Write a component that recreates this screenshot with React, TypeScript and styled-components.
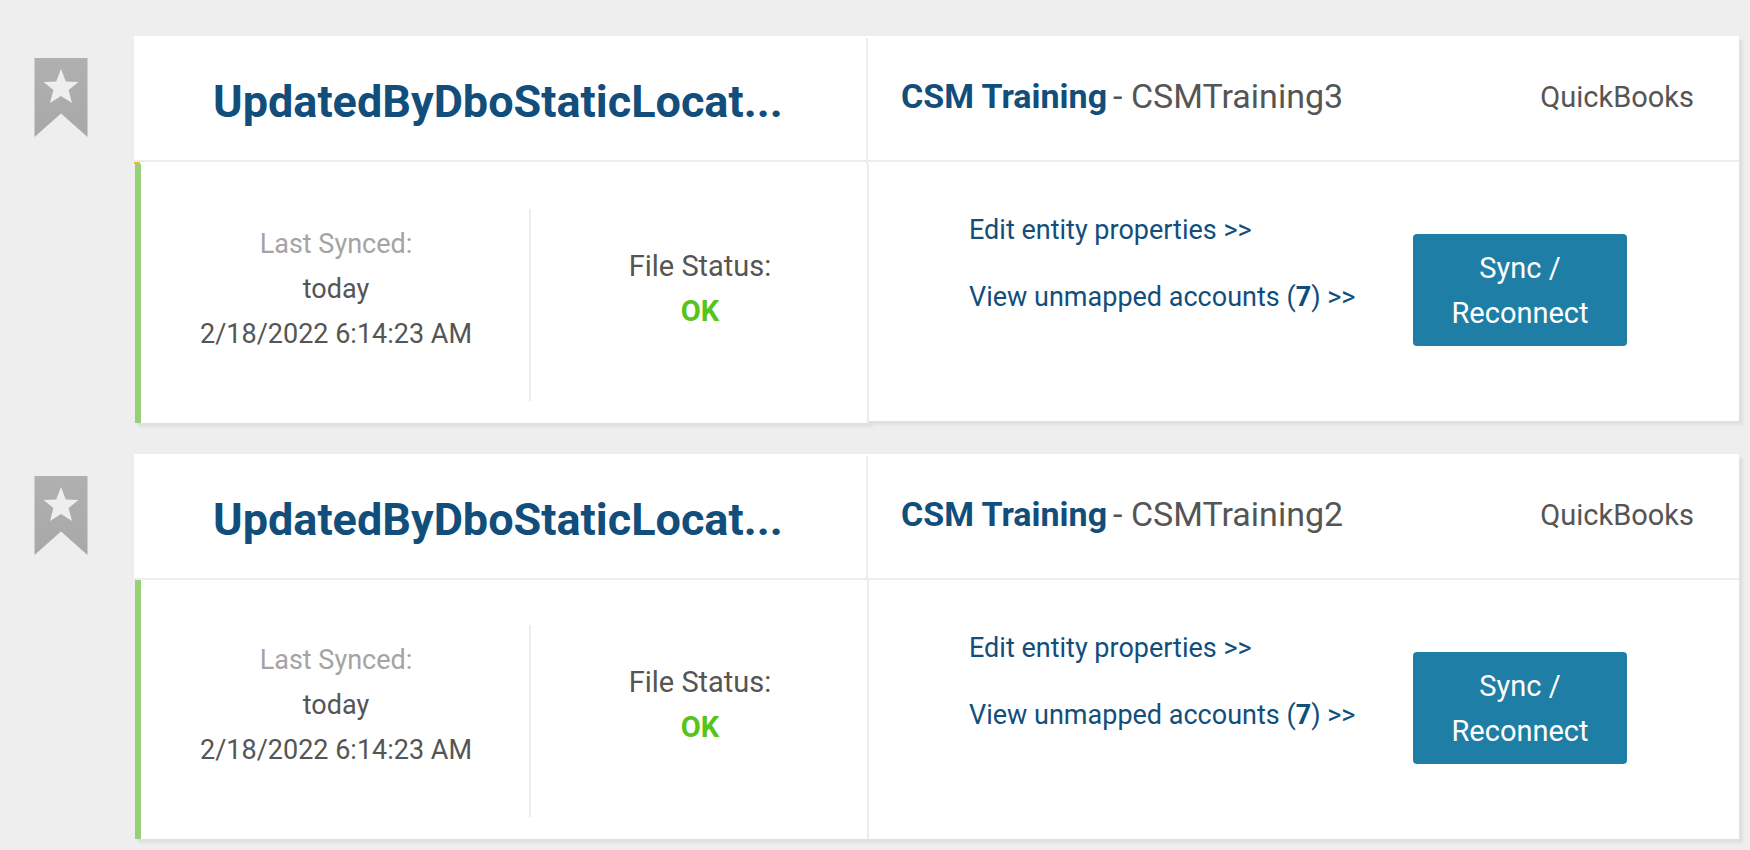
import React from "react";
import styled, { createGlobalStyle } from "styled-components";

const color = {
  page: "#eeeeee",
  line: "#ededed",
  shadow: "#e0e0e0",
  brand: "#124e7c",
  text: "#555555",
  muted: "#a4a4a4",
  green: "#97d077",
  ok: "#55c517",
  alert: "#f5b91b",
  button: "#1e7ea6",
};

const GlobalStyle = createGlobalStyle`
  *, *::before, *::after { box-sizing: border-box; }
  body {
    margin: 0;
    background: ${color.page};
    color: ${color.text};
    font-family: Roboto, "Liberation Sans", sans-serif;
    font-size: 27px;
    line-height: 45px;
  }
`;

const EntityList = styled.main`
  display: flex;
  flex-direction: column;
  gap: 31px;
  padding: 36px 11px 11px 34px;
`;

const EntityRow = styled.article`
  display: grid;
  grid-template-columns: 54px minmax(0, 1fr);
  column-gap: 46px;
  align-items: start;
`;

const FavoriteButton = styled.button`
  display: block;
  margin: 22px 0 0;
  padding: 0;
  border: 0;
  background: none;
  cursor: pointer;

  svg { display: block; }
`;

const Card = styled.div`
  display: grid;
  grid-template-columns: minmax(0, 735fr) minmax(0, 870fr);
  align-items: start;
`;

const Panel = styled.section`
  background: #fff;
  box-shadow: 4px 4px 2px ${color.shadow};
`;

const PanelHeader = styled.header`
  display: flex;
  height: 126px;
  border-bottom: 2px solid ${color.line};
`;

const TitleHeader = styled(PanelHeader)`
  padding: 2px 1px 0 0;
`;

const Title = styled.h2`
  flex: 1;
  margin: 0;
  padding: 39px 0 0 79px;
  border-right: 2px solid ${color.line};
  color: ${color.brand};
  font-size: 45px;
  font-weight: 700;
  line-height: 50px;
  white-space: nowrap;
`;

const AlertStrip = styled.div`
  height: 2px;
  margin-right: 1px;
  border-left: 6px solid ${color.alert};
  border-right: 2px solid ${color.line};
`;

const StatusBody = styled.div`
  border-left: 1px solid ${color.page};
`;

const StatusGrid = styled.div`
  display: grid;
  grid-template-columns: 390fr 336fr;
  height: 259px;
  border-left: 6px solid ${color.green};
  border-right: 2px solid ${color.line};
  text-align: center;
`;

const SyncInfo = styled.div`
  height: 192px;
  margin-top: 45px;
  padding: 13px 0 0 2px;
  border-right: 2px solid ${color.line};
`;

const Line = styled.div<{ $tone?: string }>`
  color: ${(p) => p.$tone ?? color.text};
`;

const FileStatus = styled.div`
  padding: 80px 0 0 2px;
  font-size: 29px;
`;

const StatusValue = styled.strong`
  display: block;
  color: ${color.ok};
  font-weight: 700;
`;

const CompanyHeader = styled(PanelHeader)`
  justify-content: space-between;
  padding: 38px 45px 0 32px;
`;

const Company = styled.div`
  display: flex;
  gap: 6px;
  font-size: 34px;

  strong { color: ${color.brand}; }
`;

const Source = styled.div`
  padding-top: 1px;
  font-size: 29px;
`;

const ActionsBody = styled.div`
  display: flex;
  justify-content: space-between;
  align-items: flex-start;
  height: 259px;
  padding: 46px 112px 0 100px;
`;

const Links = styled.nav`
  display: flex;
  flex-direction: column;
  gap: 22px;
`;

const ActionLink = styled.a`
  color: ${color.brand};
  text-decoration: none;
  white-space: nowrap;
`;

const SyncButton = styled.button`
  width: 214px;
  margin-top: 26px;
  padding: 12px 32px 10px;
  border: 0;
  border-radius: 4px;
  background: ${color.button};
  color: #fff;
  font: inherit;
  font-size: 29px;
  line-height: 45px;
  cursor: pointer;
`;

function Bookmark({ id }: { id: string }) {
  return (
    <svg width="54" height="79" viewBox="0 0 54 79" aria-hidden="true">
      <defs>
        <linearGradient id={id} x1="0" y1="0" x2="0" y2="1">
          <stop offset="0" stopColor="#b0b0b0" />
          <stop offset="1" stopColor="#a8a8a8" />
        </linearGradient>
      </defs>
      <path d="M0.5 0H53.5V79L27 55.5L0.5 79Z" fill={`url(#${id})`} />
      <path
        d="M27 11L31.8 23.5L44.5 24L34.6 32L38 45L27 38L16 45L19.4 32L9.5 24L22.2 23.5Z"
        fill="#eeeeee"
      />
    </svg>
  );
}

interface Entity {
  id: string;
  title: string;
  company: string;
  file: string;
  source: string;
  day: string;
  time: string;
  status: string;
  unmapped: number;
  alert: boolean;
}

const base = {
  title: "UpdatedByDboStaticLocat...",
  company: "CSM Training",
  source: "QuickBooks",
  day: "today",
  time: "2/18/2022 6:14:23 AM",
  status: "OK",
  unmapped: 7,
};

const entities: Entity[] = [
  { ...base, id: "entity-3", file: "CSMTraining3", alert: true },
  { ...base, id: "entity-2", file: "CSMTraining2", alert: false },
];

function EntityCard({ entity }: { entity: Entity }) {
  return (
    <EntityRow>
      <FavoriteButton type="button" aria-label="Favorite">
        <Bookmark id={`${entity.id}-fill`} />
      </FavoriteButton>
      <Card>
        <Panel>
          <TitleHeader>
            <Title>{entity.title}</Title>
          </TitleHeader>
          {entity.alert && <AlertStrip />}
          <StatusBody>
            <StatusGrid>
              <SyncInfo>
                <Line $tone={color.muted}>Last Synced:</Line>
                <Line>{entity.day}</Line>
                <Line>{entity.time}</Line>
              </SyncInfo>
              <FileStatus>
                File Status:
                <StatusValue>{entity.status}</StatusValue>
              </FileStatus>
            </StatusGrid>
          </StatusBody>
        </Panel>
        <Panel>
          <CompanyHeader>
            <Company>
              <strong>{entity.company}</strong>
              <span>- {entity.file}</span>
            </Company>
            <Source>{entity.source}</Source>
          </CompanyHeader>
          <ActionsBody>
            <Links>
              <ActionLink href="#properties">Edit entity properties &gt;&gt;</ActionLink>
              <ActionLink href="#unmapped">
                View unmapped accounts (<strong>{entity.unmapped}</strong>) &gt;&gt;
              </ActionLink>
            </Links>
            <SyncButton type="button">Sync / Reconnect</SyncButton>
          </ActionsBody>
        </Panel>
      </Card>
    </EntityRow>
  );
}

export default function App() {
  return (
    <>
      <GlobalStyle />
      <EntityList>
        {entities.map((entity) => (
          <EntityCard key={entity.id} entity={entity} />
        ))}
      </EntityList>
    </>
  );
}
